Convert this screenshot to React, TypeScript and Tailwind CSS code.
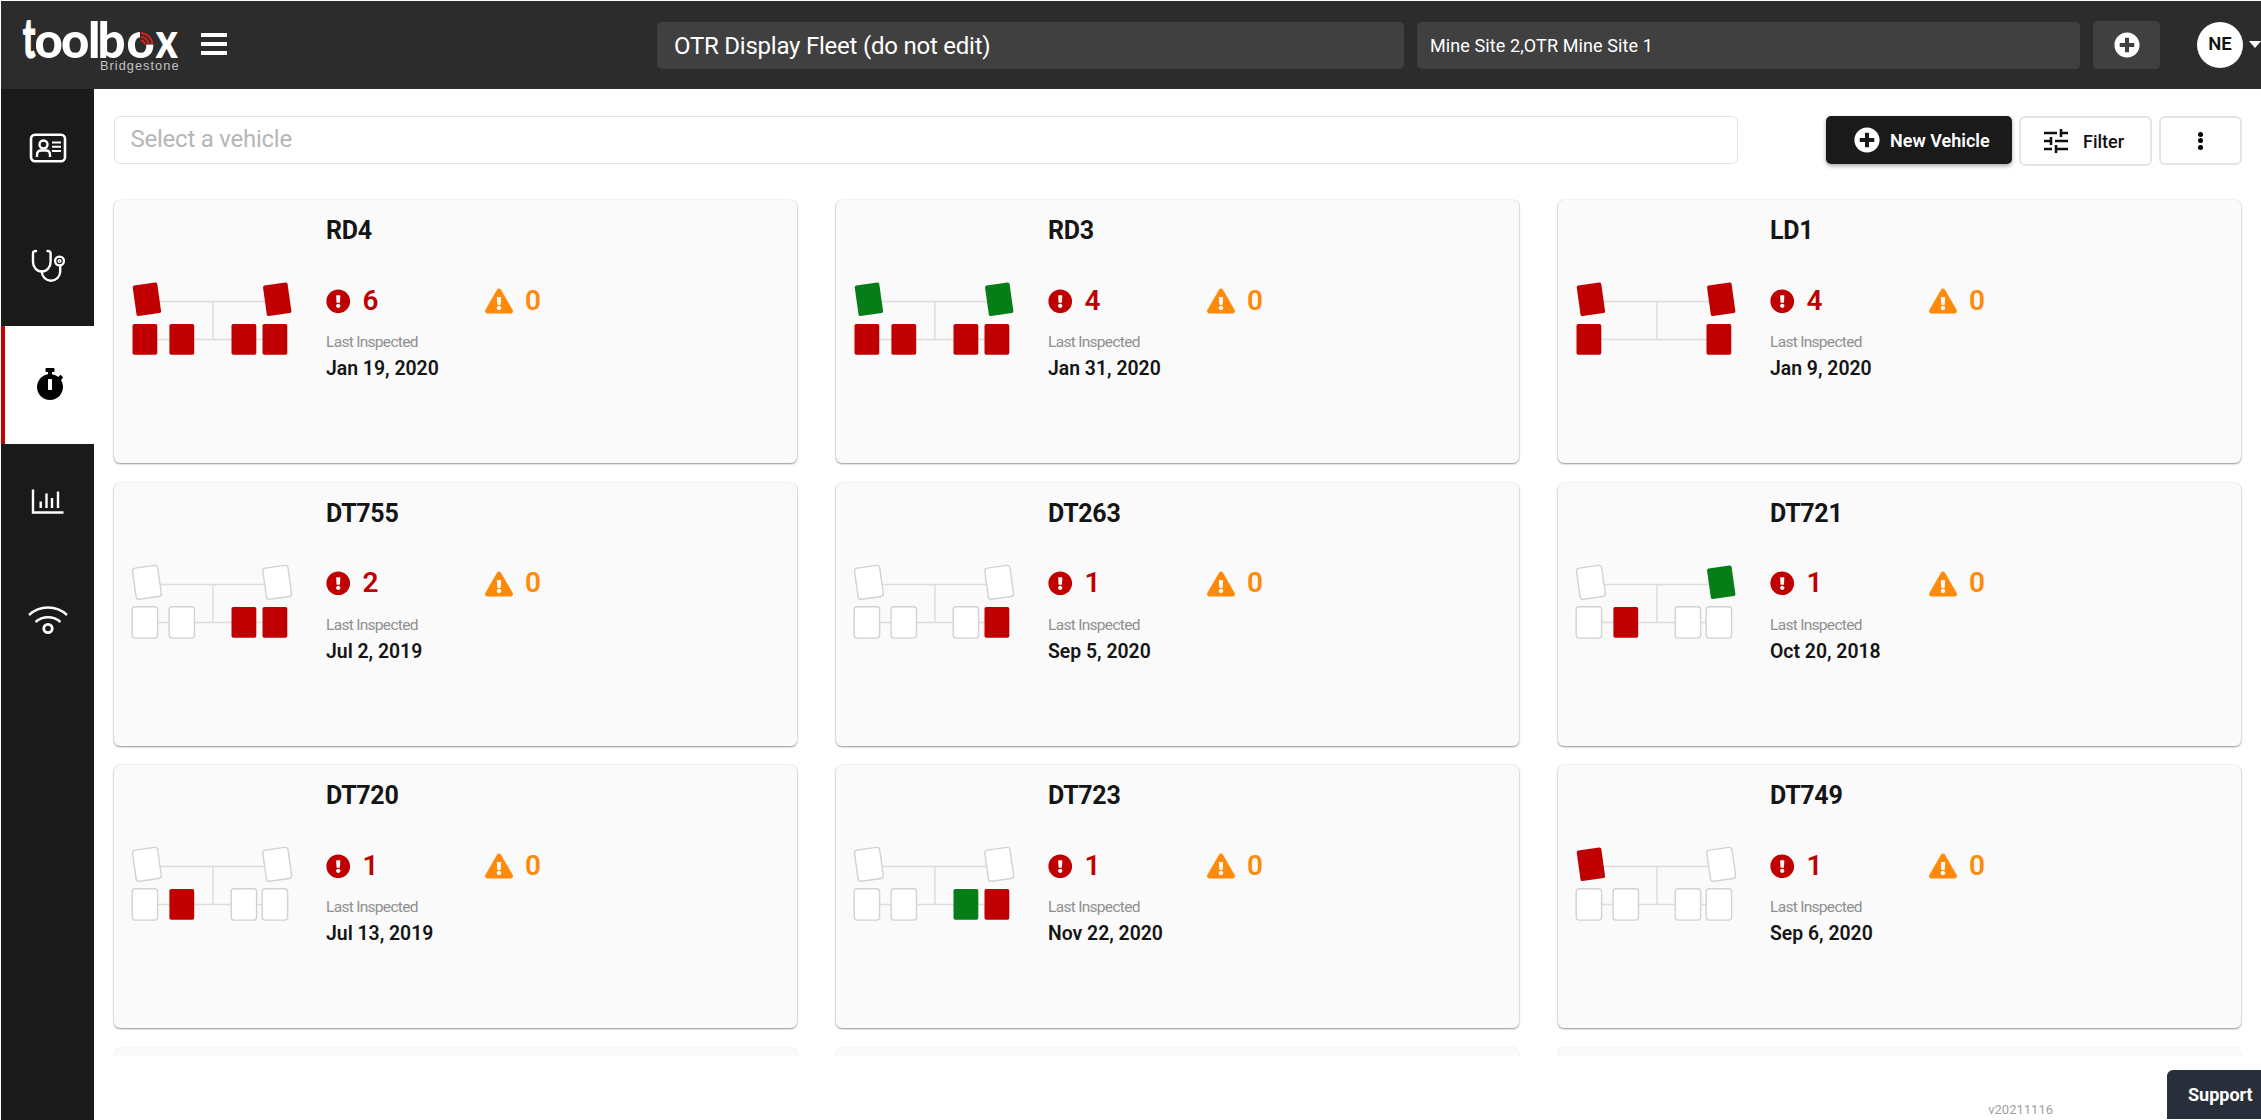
import React from "react";
import { FaStopwatch, FaExclamationTriangle, FaExclamationCircle, FaPlusCircle } from "react-icons/fa";

type Tire = "r" | "g" | "w" | "-";
type Vehicle = { name: string; tires: Tire[]; alerts: number; date: string };

// Tires: front left, front right, then the rear axle from left to right.
const vehicles: Vehicle[] = [
  { name: "RD4", tires: ["r", "r", "r", "r", "r", "r"], alerts: 6, date: "Jan 19, 2020" },
  { name: "RD3", tires: ["g", "g", "r", "r", "r", "r"], alerts: 4, date: "Jan 31, 2020" },
  { name: "LD1", tires: ["r", "r", "r", "-", "-", "r"], alerts: 4, date: "Jan 9, 2020" },
  { name: "DT755", tires: ["w", "w", "w", "w", "r", "r"], alerts: 2, date: "Jul 2, 2019" },
  { name: "DT263", tires: ["w", "w", "w", "w", "w", "r"], alerts: 1, date: "Sep 5, 2020" },
  { name: "DT721", tires: ["w", "g", "w", "r", "w", "w"], alerts: 1, date: "Oct 20, 2018" },
  { name: "DT720", tires: ["w", "w", "w", "r", "w", "w"], alerts: 1, date: "Jul 13, 2019" },
  { name: "DT723", tires: ["w", "w", "w", "w", "g", "r"], alerts: 1, date: "Nov 22, 2020" },
  { name: "DT749", tires: ["r", "w", "w", "w", "w", "w"], alerts: 1, date: "Sep 6, 2020" },
];

const tireFill = { r: "#c00000", g: "#067d17", w: "#ffffff", "-": "none" };

const tireSpots = [
  [32.9, 99.3, -8],
  [163.2, 99.3, -8],
  [30.9, 139.4, 0],
  [67.8, 139.4, 0],
  [129.9, 139.4, 0],
  [160.9, 139.4, 0],
];

function Axles({ tires }: { tires: Tire[] }) {
  return (
    <svg width="212" height="262" viewBox="0 0 212 262" className="shrink-0">
      <path d="M40 101.5H160M40 139.5H160M98.9 101.5V139.5" stroke="#dcdcdc" strokeWidth="1.4" fill="none" />
      {tireSpots.map(([x, y, a], i) => {
        const t = tires[i];
        if (t === "-") return null;
        const white = t === "w";
        const w = white ? 25.4 : 24.8;
        const h = white ? 31.4 : 30.8;
        return (
          <rect
            key={i}
            x={x - w / 2}
            y={y - h / 2}
            width={w}
            height={h}
            rx={white ? 3 : 1.8}
            transform={`rotate(${a} ${x} ${y})`}
            fill={tireFill[t]}
            stroke={white ? "#d2d2d2" : "none"}
            strokeWidth="1.4"
          />
        );
      })}
    </svg>
  );
}

function Card({ v }: { v: Vehicle }) {
  return (
    <div className="flex h-[263px] overflow-hidden rounded-[6px] bg-[#fafafa] shadow-[0_1px_2px_rgba(0,0,0,0.4),0_0_2px_rgba(0,0,0,0.12)]">
      <Axles tires={v.tires} />
      <div className="flex flex-col pt-[14px]">
        <div className="text-[25px] leading-[34px] font-bold tracking-[-0.3px] text-[#151515]">{v.name}</div>
        <div className="mt-[35px] flex h-[36px] items-center text-[28px] font-semibold">
          <FaExclamationCircle className="text-[24.5px] text-[#c00000]" />
          <span className="-mt-px ml-[12px] w-[122px] text-[#c00000]">{v.alerts}</span>
          <FaExclamationTriangle className="text-[28px] text-[#ff8a0a]" />
          <span className="-mt-px ml-[12.5px] text-[#ff8a0a]">0</span>
        </div>
        <div className="mt-[13px] text-[15.5px] leading-[20px] tracking-[-0.7px] text-[#8f8f8f]">Last Inspected</div>
        <div className="mt-[3px] text-[19.4px] leading-[28px] font-semibold text-[#151515]">{v.date}</div>
      </div>
    </div>
  );
}

function Logo() {
  return (
    <svg width="190" height="88" viewBox="0 0 190 88" className="shrink-0">
      <g fill="#fff" fontFamily="Lato, sans-serif" fontWeight="900" fontSize="49">
        <text transform="translate(22.8 57) scale(0.68 1.14)" stroke="#fff" strokeWidth="1">
          t
        </text>
        <text x="34.5 61 88 97.5 126.5" y="57">
          oolbo
        </text>
        <text transform="translate(155.6 57) scale(0.86 1)">x</text>
      </g>
      <path d="M140 43.5V29H155V43.5Z" fill="#2c2c2c" />
      <g fill="none" stroke="#dc2020" strokeWidth="2">
        <path d="M141 32.3A11.2 11.2 0 0 1 152.2 43.5" />
        <path d="M141 36A7.5 7.5 0 0 1 148.5 43.5" />
        <path d="M141 39.6A3.9 3.9 0 0 1 144.9 43.5" />
      </g>
      <text x="100" y="69" fill="#c4c4c4" fontFamily="Liberation Sans, sans-serif" fontSize="12.8" textLength="78.5">
        Bridgestone
      </text>
    </svg>
  );
}

function IdCard() {
  return (
    <svg width="38" height="30" viewBox="0 0 38 30" fill="none" stroke="#fff">
      <rect x="2" y="1.7" width="34" height="26.6" rx="4" strokeWidth="2.6" />
      <circle cx="14.5" cy="11.5" r="4" strokeWidth="2.4" />
      <path d="M8 24V22Q8 17.5 12 17.5H17Q21 17.5 21 22V24" strokeWidth="2.4" />
      <path d="M23 9.5H32M23 13.8H32M23 18.1H32" strokeWidth="2" />
    </svg>
  );
}

function Stethoscope() {
  return (
    <svg width="34" height="34" viewBox="0 0 34 34" fill="none" stroke="#fff" strokeWidth="2.4" strokeLinecap="round">
      <path d="M5 2Q2 2 2 4.5V13A8.8 9.5 0 0 0 19.6 13V4.5Q19.6 2 16.5 2" />
      <path d="M10.8 22.5A9.2 9.2 0 0 0 29.2 22.5V16.5" />
      <circle cx="28.5" cy="12" r="4.4" />
      <circle cx="28.5" cy="12" r="1.3" strokeWidth="1.4" />
    </svg>
  );
}

function Chart() {
  return (
    <svg width="34" height="26" viewBox="0 0 34 26" fill="none" stroke="#fff" strokeWidth="2.4">
      <path d="M2 .5V23.5H32.5M9.7 19V12.5M15.5 19V4.5M21 19V9M27 19V2.5" />
    </svg>
  );
}

function Wifi() {
  return (
    <svg width="40" height="32" viewBox="0 0 40 32" fill="none" stroke="#fff" strokeWidth="2.4">
      <path d="M1 11A28 28 0 0 1 39 11M7.5 18A19 19 0 0 1 32.5 18" />
      <circle cx="20" cy="24.5" r="4.2" strokeWidth="2.8" />
    </svg>
  );
}

function NavItem({ children, active = false }: { children: React.ReactNode; active?: boolean }) {
  return (
    <div
      className={
        active
          ? "flex h-[118px] shrink-0 items-center justify-center border-l-[4px] border-[#c80000] bg-white pb-[3px] text-black"
          : "flex h-[118px] shrink-0 items-center justify-center pb-[3px] text-white"
      }
    >
      {children}
    </div>
  );
}

export default function App() {
  return (
    <div className="flex h-[1120px] w-[2261px] flex-col overflow-hidden bg-white pt-px pl-px font-[Roboto,sans-serif]">
      <header className="flex h-[88px] shrink-0 items-center bg-[#2c2c2c] text-white">
        <div className="-mt-px flex h-[88px] w-[656px] shrink-0 items-center">
          <div className="-ml-px">
            <Logo />
          </div>
          <div className="-mt-px ml-[11px] flex w-[26px] flex-col gap-[5px]">
            <span className="h-[4px] bg-white" />
            <span className="h-[4px] bg-white" />
            <span className="h-[4px] bg-white" />
          </div>
        </div>
        <div className="flex h-[47px] w-[747px] shrink-0 items-center rounded-[5px] bg-[#404040] pt-px pl-[17px] text-[24px] tracking-[-0.23px]">
          OTR Display Fleet (do not edit)
        </div>
        <div className="ml-[13px] flex h-[47px] w-[663px] shrink-0 items-center rounded-[5px] bg-[#404040] pl-[13px] text-[18px] tracking-[0.1px]">
          Mine Site 2,OTR Mine Site 1
        </div>
        <div className="ml-[13px] flex h-[48px] w-[67px] shrink-0 items-center justify-center rounded-[5px] bg-[#404040]">
          <FaPlusCircle className="text-[26px]" />
        </div>
        <div className="-mt-px ml-[37px] flex size-[46px] shrink-0 items-center justify-center rounded-full bg-white text-[18.5px] font-semibold text-[#111]">
          NE
        </div>
        <svg width="12" height="8" viewBox="0 0 12 8" className="ml-[6px] shrink-0">
          <path d="M0 0H12L6 7Z" fill="#fff" />
        </svg>
      </header>

      <div className="flex min-h-0 flex-1">
        <nav className="flex w-[93px] shrink-0 flex-col bg-[#1a1a1a] pt-px">
          <NavItem>
            <IdCard />
          </NavItem>
          <NavItem>
            <Stethoscope />
          </NavItem>
          <NavItem active>
            <FaStopwatch className="text-[32px]" />
          </NavItem>
          <NavItem>
            <Chart />
          </NavItem>
          <NavItem>
            <Wifi />
          </NavItem>
        </nav>

        <main className="flex min-w-0 flex-1 flex-col">
          <div className="flex h-[110px] shrink-0 items-start pt-[27px] pl-[20px]">
            <div className="flex h-[48px] w-[1624px] shrink-0 items-center rounded-[6px] border-[1.5px] border-[#e2e2e2] pl-[15.5px] text-[24px] tracking-[-0.24px] text-[#b6b6b6]">
              <span className="-mt-[2px]">Select a vehicle</span>
            </div>
            <button className="ml-[88px] flex h-[48px] w-[186px] shrink-0 items-center rounded-[5px] bg-[#1a1a1a] pl-[28px] text-[18px] font-semibold text-white shadow-[0_2px_4px_rgba(0,0,0,0.35)]">
              <FaPlusCircle className="mr-[10px] shrink-0 text-[26px]" />
              New Vehicle
            </button>
            <button className="ml-[7px] flex h-[50px] w-[133px] shrink-0 items-center rounded-[6px] border-2 border-[#e4e4e4] pl-[23px] text-[18px] font-medium text-[#111]">
              <svg width="24" height="24" viewBox="0 0 24 24" className="mr-[15px]" fill="none" stroke="#111" strokeWidth="2.6">
                <path d="M0 4H13M17 4H24M17 0V8M0 12H7M11 12H24M7 8V16M0 20H8M12 20H24M12 16V24" />
              </svg>
              Filter
            </button>
            <button className="ml-[7px] flex h-[49px] w-[83px] shrink-0 flex-col items-center justify-center gap-[1.5px] rounded-[6px] border-2 border-[#e4e4e4]">
              <span className="size-[5px] rounded-full bg-black" />
              <span className="size-[5px] rounded-full bg-black" />
              <span className="size-[5px] rounded-full bg-black" />
            </button>
          </div>

          <div className="h-[857px] shrink-0 overflow-hidden pt-px pr-[20px] pl-[20px]">
            <div className="grid grid-cols-3 gap-x-[39px] gap-y-[19.5px]">
              {vehicles.map((v) => (
                <Card key={v.name} v={v} />
              ))}
              {[0, 1, 2].map((i) => (
                <div key={i} className="h-[263px] rounded-[6px] bg-[#fafafa] shadow-[0_0_2px_rgba(0,0,0,0.16)]" />
              ))}
            </div>
          </div>

          <footer className="flex min-h-0 flex-1 items-end justify-end">
            <span className="mr-[114px] mb-[2px] text-[13px] leading-[16px] text-[#a0a0a0]">v20211116</span>
            <div className="mb-px flex h-[49px] w-[94px] items-center rounded-tl-[6px] bg-[#282f3a] pl-[21px] text-[18px] font-bold text-white">
              Support
            </div>
          </footer>
        </main>
      </div>
    </div>
  );
}
